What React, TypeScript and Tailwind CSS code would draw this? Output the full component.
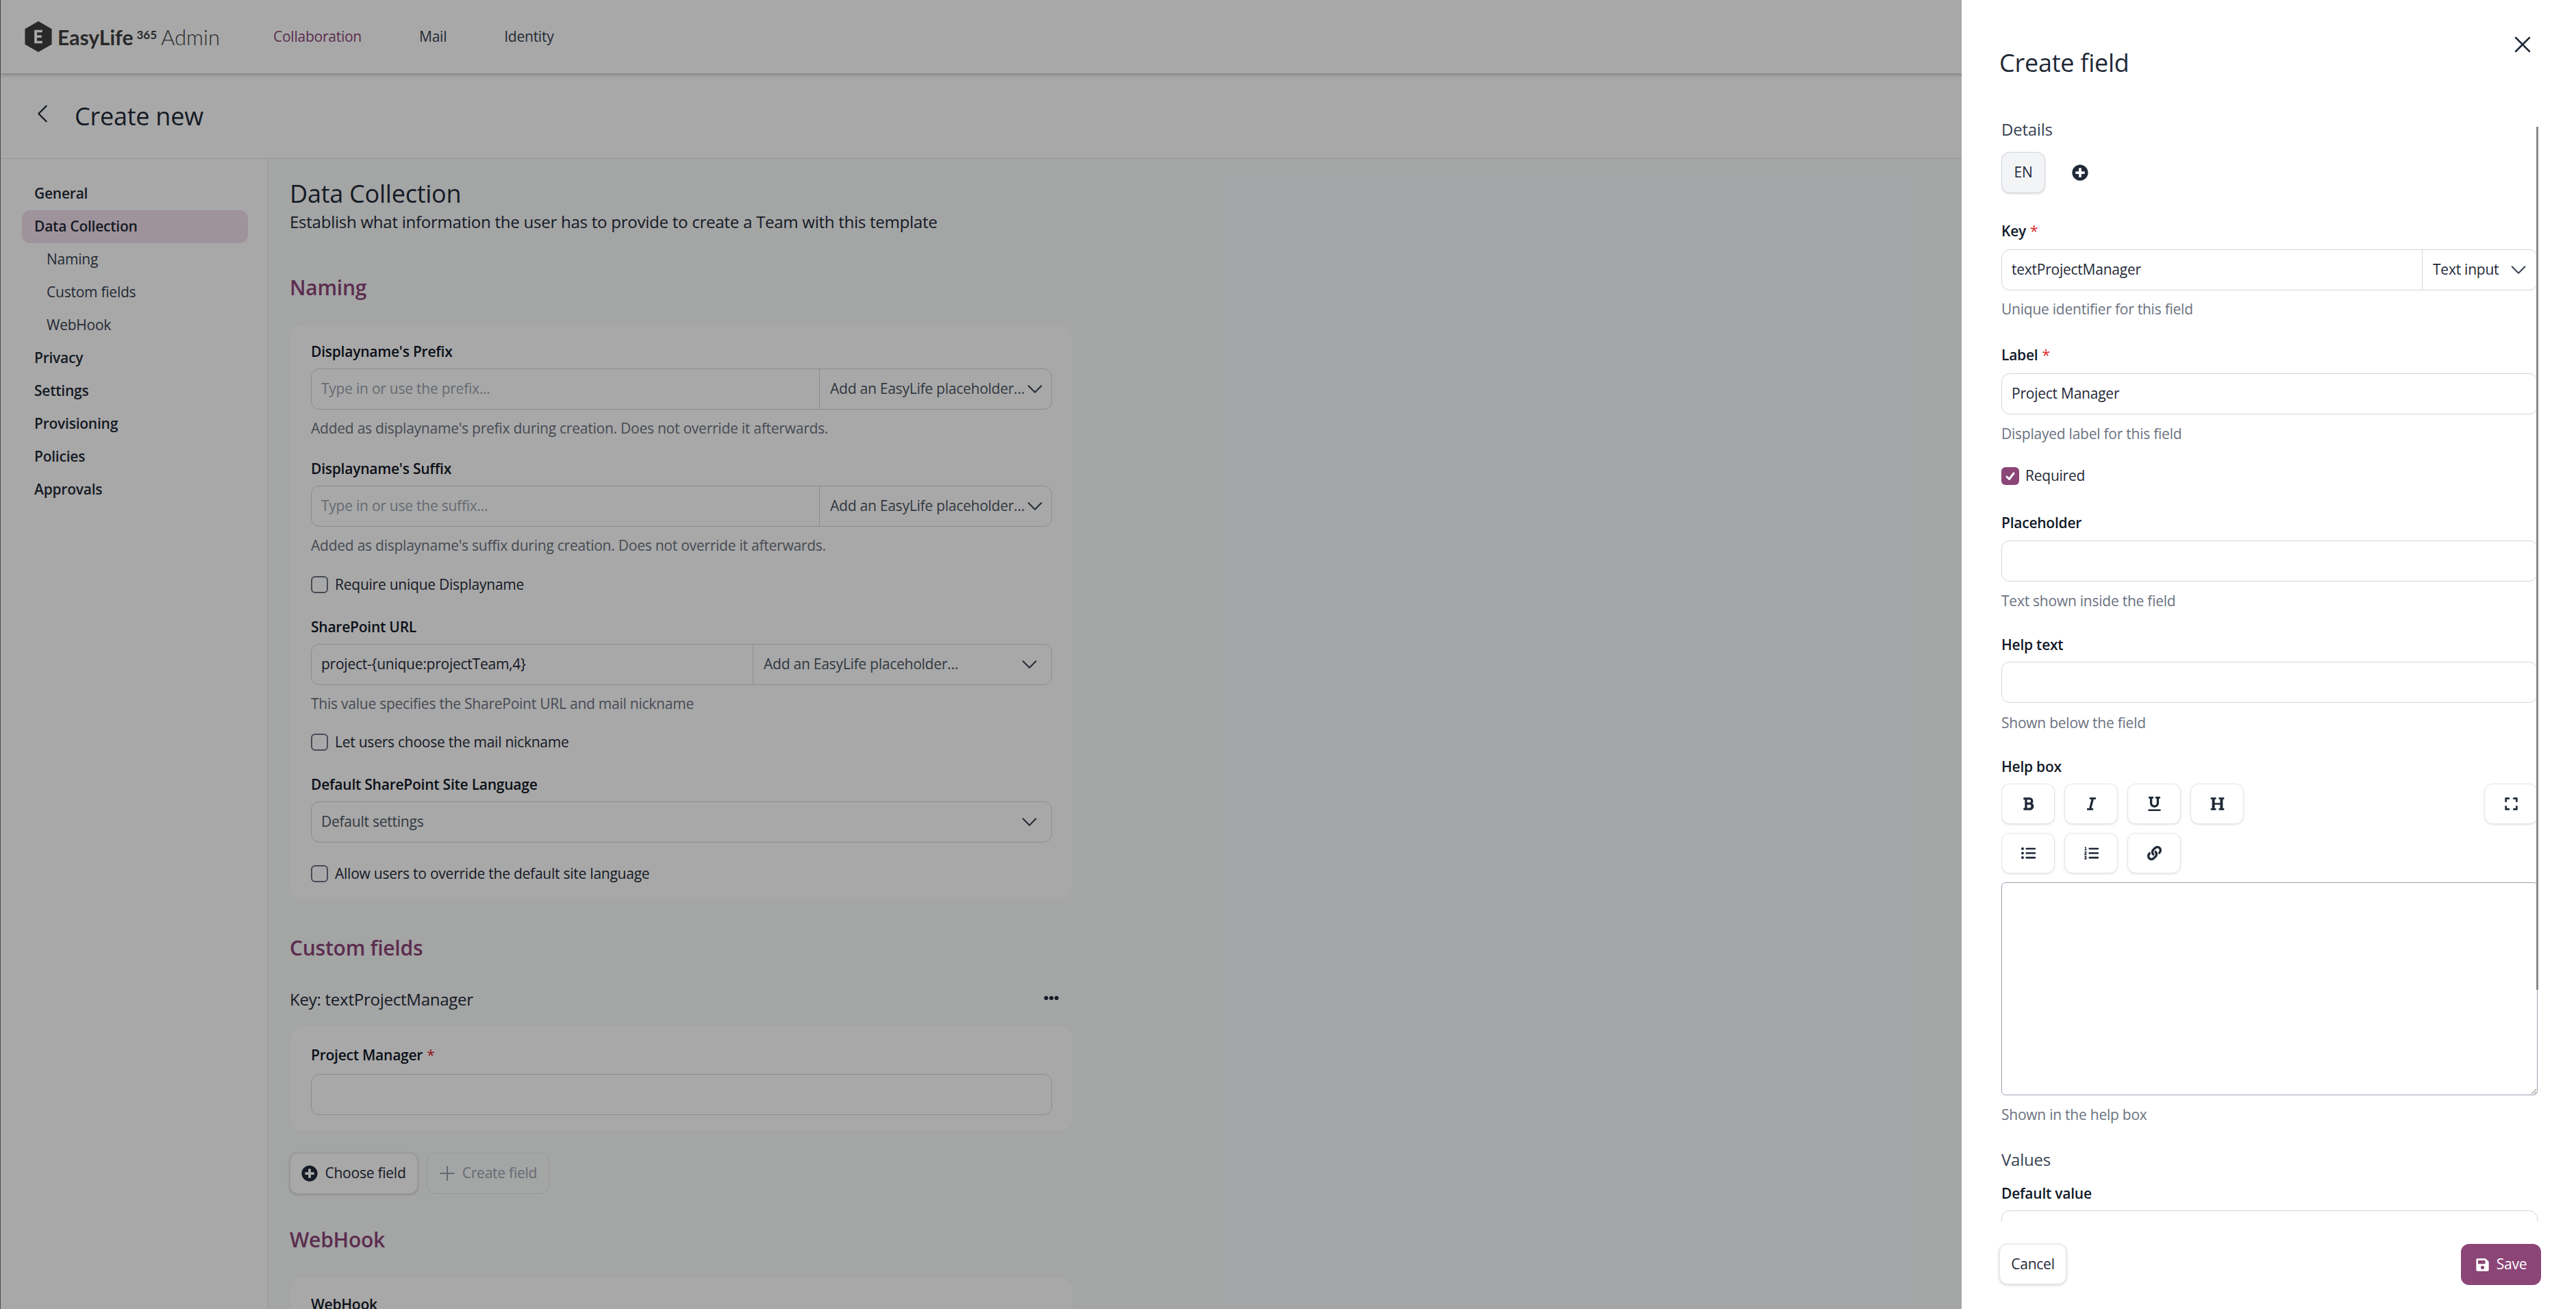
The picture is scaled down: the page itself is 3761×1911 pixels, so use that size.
import React from "react";
import { FaBold, FaItalic, FaUnderline, FaHeading, FaExpand, FaListUl, FaListOl, FaLink, FaPlusCircle, FaSave, FaPlus, FaEllipsisH } from "react-icons/fa";

const Chevron = ({ className = "" }: { className?: string }) => (
  <svg viewBox="0 0 24 24" fill="none" stroke="currentColor" strokeWidth={1.6} strokeLinecap="round" strokeLinejoin="round" className={"h-[30px] w-[30px] shrink-0 " + className}>
    <path d="M19.5 8.25l-7.5 7.5-7.5-7.5" />
  </svg>
);

const FieldLabel = ({ children, required, className = "" }: { children: React.ReactNode; required?: boolean; className?: string }) => (
  <div className={"h-[30px] text-[21px] leading-[30px] font-semibold text-[#111827] " + className}>
    {children}
    {required && <span className="ml-[6px] font-normal text-[#dc2626]">*</span>}
  </div>
);

const Help = ({ children, className = "" }: { children: React.ReactNode; className?: string }) => (
  <div className={"h-[30px] text-[21px] leading-[30px] text-[#6b7280] " + className}>{children}</div>
);

const Check = ({ children, className = "" }: { children: React.ReactNode; className?: string }) => (
  <div className={"flex h-[30px] items-center gap-[10px] text-[21px] leading-[30px] text-[#1f2937] " + className}>
    <span className="h-[25px] w-[25px] shrink-0 rounded-[6px] border-2 border-[#6b7280] bg-white" />
    {children}
  </div>
);

const PlaceholderInput = ({ left, value, ph, sel, selDark }: { left: string; value?: string; ph?: string; sel: string; selDark?: boolean }) => (
  <div className="mt-[10px] flex h-[60px] rounded-[12px] border border-[#d1d5db] bg-white text-[21px]">
    <div className={"flex items-center border-r border-[#d1d5db] pl-[14px] " + left}>
      {value ? <span className="text-[#1f2937]">{value}</span> : <span className="text-[#9ca3af]">{ph}</span>}
    </div>
    <div className={"flex min-w-0 flex-1 items-center justify-between pl-[15px] pr-[17px] " + (selDark ? "text-[#4b5563]" : "text-[#4b5563]")}>
      <span className="whitespace-nowrap">{sel}</span>
      <Chevron className="text-[#374151]" />
    </div>
  </div>
);

const Card = ({ children, className = "" }: { children: React.ReactNode; className?: string }) => (
  <div className={"rounded-[18px] border border-[#f3f4f6] bg-white px-[30px] " + className}>{children}</div>
);

const SectionTitle = ({ children, className = "" }: { children: React.ReactNode; className?: string }) => (
  <h2 className={"h-[42px] text-[30px] leading-[42px] font-semibold text-[#8b4577] " + className}>{children}</h2>
);

const navItems = [
  { t: "General", bold: true },
  { t: "Data Collection", bold: true, active: true },
  { t: "Naming", sub: true },
  { t: "Custom fields", sub: true },
  { t: "WebHook", sub: true },
  { t: "Privacy", bold: true },
  { t: "Settings", bold: true },
  { t: "Provisioning", bold: true },
  { t: "Policies", bold: true },
  { t: "Approvals", bold: true },
];

const DrawerInput = ({ value, className = "" }: { value?: string; className?: string }) => (
  <div className={"flex h-[60px] items-center rounded-[12px] border border-[#d1d5db] bg-white pl-[14px] text-[21px] text-[#1f2937] " + className}>{value}</div>
);

const ToolBtn = ({ children, className = "" }: { children: React.ReactNode; className?: string }) => (
  <div className={"flex h-[59px] w-[78px] items-center justify-center rounded-[12px] border border-[#e5e7eb] bg-white text-[#1f2937] shadow-[0_1px_3px_rgba(0,0,0,0.12)] " + className}>{children}</div>
);

export default function App() {
  return (
    <div className="relative h-[1911px] w-[3761px] overflow-hidden bg-white font-['Open_Sans',sans-serif] tracking-[-0.015em]">
      {/* underlying page */}
      <div className="flex h-full flex-col border-l border-l-[#70707c]">
        <header className="flex h-[107px] shrink-0 items-center bg-white pl-[35px] shadow-[0_2px_6px_rgba(0,0,0,0.25)] relative">
          <svg viewBox="0 0 40 46" className="h-[45px] w-[40px] shrink-0">
            <polygon points="20,0 40,11.5 40,34.5 20,46 0,34.5 0,11.5" fill="#3f3f3f" />
            <path d="M14 13h12v3.6h-8v4.4h7v3.6h-7v4.8h8V33H14z" fill="#fff" />
          </svg>
          <span className="ml-[8px] font-['Lato',sans-serif] text-[30px] leading-[40px] font-bold tracking-normal text-[#3f3f3f]">EasyLife</span>
          <span className="mb-[6px] ml-[5px] font-['Lato',sans-serif] text-[17px] font-bold tracking-normal text-[#3f3f3f]">365</span>
          <span className="ml-[6px] font-['Lato',sans-serif] text-[31px] leading-[40px] font-light tracking-normal text-[#3f3f3f]">Admin</span>
          <nav className="ml-[78px] flex items-center gap-[84px] text-[21px] font-medium">
            <span className="text-[#8b4577]">Collaboration</span>
            <span className="text-[#374151]">Mail</span>
            <span className="text-[#374151]">Identity</span>
          </nav>
        </header>
        <div className="flex h-[125px] shrink-0 items-center border-b border-[#e5e7eb] bg-white pl-[43px]">
          <svg viewBox="0 0 24 24" fill="none" stroke="#1f2937" strokeWidth={1.6} strokeLinecap="round" strokeLinejoin="round" className="h-[36px] w-[36px] -translate-y-[3px]">
            <path d="M15.75 19.5L8.25 12l7.5-7.5" />
          </svg>
          <h1 className="ml-[29px] text-[36px] leading-[45px] font-medium text-[#1f2937]">Create new</h1>
        </div>
        <div className="flex min-h-0 flex-1">
          <aside className="w-[391px] shrink-0 border-r border-[#e5e7eb] bg-white pl-[31px] pt-[27px]">
            {navItems.map((n) => (
              <div
                key={n.t}
                className={
                  "flex h-[48px] w-[330px] items-center rounded-[12px] text-[21px] " +
                  (n.sub ? "pl-[36px] font-normal text-[#374151]" : "pl-[18px] font-semibold text-[#1f2937]") +
                  (n.active ? " bg-[#f1dfeb]" : "")
                }
              >
                {n.t}
              </div>
            ))}
          </aside>
          <main className="min-w-0 flex-1 bg-[#f9fafb] pl-[31px] pt-[28px]">
            <div className="w-[1144px]">
              <h2 className="h-[45px] text-[36px] leading-[45px] font-medium text-[#1f2937]">Data Collection</h2>
              <p className="mt-[1px] h-[36px] text-[24px] leading-[36px] text-[#1f2937]">Establish what information the user has to provide to create a Team with this template</p>
              <SectionTitle className="mt-[57px]">Naming</SectionTitle>
              <Card className="mt-[31px] pb-[24px] pt-[25px]">
                <FieldLabel>Displayname's Prefix</FieldLabel>
                <PlaceholderInput left="w-[742px]" ph="Type in or use the prefix..." sel="Add an EasyLife placeholder..." />
                <Help className="mt-[12px]">Added as displayname's prefix during creation. Does not override it afterwards.</Help>
                <FieldLabel className="mt-[29px]">Displayname's Suffix</FieldLabel>
                <PlaceholderInput left="w-[742px]" ph="Type in or use the suffix..." sel="Add an EasyLife placeholder..." />
                <Help className="mt-[12px]">Added as displayname's suffix during creation. Does not override it afterwards.</Help>
                <Check className="mt-[27px]">Require unique Displayname</Check>
                <FieldLabel className="mt-[32px]">SharePoint URL</FieldLabel>
                <PlaceholderInput left="w-[645px]" value="project-{unique:projectTeam,4}" sel="Add an EasyLife placeholder..." />
                <Help className="mt-[12px]">This value specifies the SharePoint URL and mail nickname</Help>
                <Check className="mt-[26px]">Let users choose the mail nickname</Check>
                <FieldLabel className="mt-[32px]">Default SharePoint Site Language</FieldLabel>
                <div className="mt-[10px] flex h-[60px] items-center justify-between rounded-[12px] border border-[#d1d5db] bg-white pl-[14px] pr-[17px] text-[21px] text-[#4b5563]">
                  <span>Default settings</span>
                  <Chevron className="text-[#374151]" />
                </div>
                <Check className="mt-[30px]">Allow users to override the default site language</Check>
              </Card>
              <SectionTitle className="mt-[48px]">Custom fields</SectionTitle>
              <div className="mt-[36px] flex h-[36px] items-center justify-between pr-[21px]">
                <span className="text-[24px] leading-[36px] font-medium text-[#1f2937]">Key: textProjectManager</span>
                <FaEllipsisH className="h-[22px] w-[22px] -translate-y-[2px] text-[#1f2937]" />
              </div>
              <Card className="mt-[20px] h-[155px] pt-[27px]">
                <FieldLabel required>Project Manager</FieldLabel>
                <div className="mt-[13px] h-[60px] rounded-[12px] border border-[#d1d5db] bg-white" />
              </Card>
              <div className="mt-[31px] flex gap-[13px]">
                <div className="flex h-[60px] w-[187px] items-center justify-center gap-[10px] rounded-[12px] border border-[#e5e7eb] bg-white text-[21px] text-[#1f2937] shadow-[0_1px_4px_rgba(0,0,0,0.2)]">
                  <FaPlusCircle className="h-[24px] w-[24px] text-[#1f2937]" />
                  Choose field
                </div>
                <div className="flex h-[60px] w-[179px] items-center justify-center gap-[10px] rounded-[12px] border border-[#e5e7eb] text-[21px] text-[#9ca3af]">
                  <svg viewBox="0 0 24 24" fill="none" stroke="#9ca3af" strokeWidth={2} strokeLinecap="round" className="h-[24px] w-[24px]"><path d="M12 2v20M2 12h20" /></svg>
                  Create field
                </div>
              </div>
              <SectionTitle className="mt-[46px]">WebHook</SectionTitle>
              <Card className="mt-[33px] h-[200px] pt-[24px]">
                <FieldLabel>WebHook</FieldLabel>
              </Card>
            </div>
          </main>
        </div>
      </div>

      {/* dim overlay */}
      <div className="absolute inset-0 bg-black/[.34]" />

      {/* drawer */}
      <aside className="absolute inset-y-0 right-0 flex w-[897px] flex-col bg-white">
        <div className="relative h-[114px] shrink-0 pl-[55px] pt-[69px]">
          <h2 className="h-[45px] text-[36px] leading-[45px] font-medium text-[#1f2937]">Create field</h2>
          <svg viewBox="0 0 24 24" fill="none" stroke="#1f2937" strokeWidth={1.5} strokeLinecap="round" className="absolute left-[799px] top-[45px] h-[40px] w-[40px]">
            <path d="M6 18L18 6M6 6l12 12" />
          </svg>
        </div>
        <div className="relative ml-[58px] mt-[54px] h-[1615px] w-[784px] shrink-0 overflow-hidden">
          <div className="absolute right-0 top-[17px] z-10 h-[1260px] w-[3px] bg-[#8a8a8a]" />
          <div className="w-[783px] pt-[3px]">
            <h3 className="h-[36px] text-[24px] leading-[36px] font-medium text-[#374151]">Details</h3>
            <div className="mt-[15px] flex items-center">
              <div className="flex h-[60px] w-[64px] items-center justify-center rounded-[12px] border border-[#d1d5db] bg-[#f3f4f6] text-[21px] text-[#1f2937] shadow-[0_1px_3px_rgba(0,0,0,0.15)]">EN</div>
              <FaPlusCircle className="ml-[39px] h-[24px] w-[24px] text-[#1f2937]" />
            </div>
            <FieldLabel required className="mt-[40px]">Key</FieldLabel>
            <div className="mt-[12px] flex h-[60px] rounded-[12px] border border-[#d1d5db] bg-white text-[21px]">
              <div className="flex w-[614px] items-center border-r border-[#d1d5db] pl-[14px] text-[#1f2937]">textProjectManager</div>
              <div className="flex flex-1 items-center justify-between pl-[15px] pr-[12px] font-medium text-[#1f2937]">
                <span>Text input</span>
                <Chevron className="text-[#374151]" />
              </div>
            </div>
            <Help className="mt-[12px]">Unique identifier for this field</Help>
            <FieldLabel required className="mt-[37px]">Label</FieldLabel>
            <DrawerInput value="Project Manager" className="mt-[12px]" />
            <Help className="mt-[13px]">Displayed label for this field</Help>
            <div className="mt-[32px] flex h-[30px] items-center gap-[9px] text-[21px] text-[#1f2937]">
              <span className="flex h-[26px] w-[26px] items-center justify-center rounded-[6px] bg-[#8b4577]">
                <svg viewBox="0 0 20 20" className="h-[20px] w-[20px]" fill="none" stroke="#fff" strokeWidth={3} strokeLinecap="round" strokeLinejoin="round"><path d="M5 11l3.5 3.5L15 6" /></svg>
              </span>
              Required
            </div>
            <FieldLabel className="mt-[38px]">Placeholder</FieldLabel>
            <DrawerInput className="mt-[11px]" />
            <Help className="mt-[13px]">Text shown inside the field</Help>
            <FieldLabel className="mt-[34px]">Help text</FieldLabel>
            <DrawerInput className="mt-[10px]" />
            <Help className="mt-[14px]">Shown below the field</Help>
            <FieldLabel className="mt-[34px]">Help box</FieldLabel>
            <div className="mt-[10px] flex justify-between">
              <div className="flex gap-[14px]">
                <ToolBtn><FaBold className="h-[21px] w-[21px]" /></ToolBtn>
                <ToolBtn><FaItalic className="h-[21px] w-[21px]" /></ToolBtn>
                <ToolBtn><FaUnderline className="h-[21px] w-[21px]" /></ToolBtn>
                <ToolBtn><FaHeading className="h-[21px] w-[21px]" /></ToolBtn>
              </div>
              <ToolBtn><FaExpand className="h-[21px] w-[21px]" /></ToolBtn>
            </div>
            <div className="mt-[13px] flex gap-[14px]">
              <ToolBtn><FaListUl className="h-[21px] w-[21px]" /></ToolBtn>
              <ToolBtn><FaListOl className="h-[21px] w-[21px]" /></ToolBtn>
              <ToolBtn><FaLink className="h-[21px] w-[21px]" /></ToolBtn>
            </div>
            <textarea readOnly className="mt-[13px] block h-[311px] w-full rounded-[6px] border border-[#9ca3af] bg-white" />
            <Help className="mt-[13px]">Shown in the help box</Help>
            <h3 className="mt-[33px] h-[36px] text-[24px] leading-[36px] font-medium text-[#374151]">Values</h3>
            <FieldLabel className="mt-[16px]">Default value</FieldLabel>
            <DrawerInput className="mt-[10px]" />
          </div>
        </div>
        <div className="mt-[33px] flex items-start justify-between pl-[55px] pr-[51px]">
          <div className="flex h-[59px] w-[98px] items-center justify-center rounded-[12px] border border-[#e5e7eb] bg-white text-[21px] text-[#1f2937] shadow-[0_1px_4px_rgba(0,0,0,0.2)]">Cancel</div>
          <div className="flex h-[60px] w-[117px] items-center justify-center gap-[10px] rounded-[12px] bg-[#8b4577] text-[21px] text-white">
            <FaSave className="h-[21px] w-[21px]" />
            Save
          </div>
        </div>
      </aside>
    </div>
  );
}
